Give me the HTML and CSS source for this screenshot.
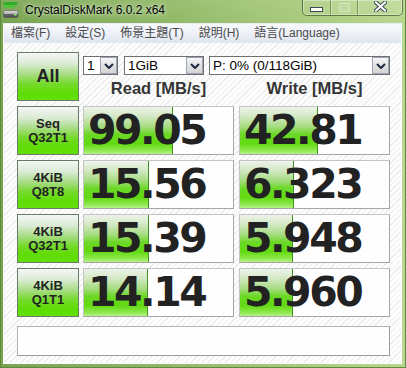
FILE: index.html
```html
<!DOCTYPE html>
<html>
<head>
<meta charset="utf-8">
<link rel="stylesheet" href="styles.css">
</head>
<body>
<div class="window">
  <div class="titlebar">
    <svg class="app-icon" width="16" height="16" viewBox="0 0 16 16">
      <defs>
        <linearGradient id="drv" x1="0" y1="0" x2="0" y2="1">
          <stop offset="0" stop-color="#e4e4e4"/>
          <stop offset="0.45" stop-color="#b0b0b0"/>
          <stop offset="0.5" stop-color="#6a6a6a"/>
          <stop offset="1" stop-color="#4a4a4a"/>
        </linearGradient>
      </defs>
      <rect x="0.5" y="0" width="14" height="3" rx="1" fill="#2fae2a"/>
      <rect x="0.5" y="3.2" width="11" height="2.6" rx="1" fill="#48c63a"/>
      <rect x="0.5" y="8.5" width="14.5" height="7" rx="1.5" fill="url(#drv)" stroke="#5a5a5a" stroke-width="0.6"/>
      <rect x="11" y="12" width="2.5" height="1.5" fill="#8ef06a"/>
    </svg>
    <span class="title">CrystalDiskMark 6.0.2 x64</span>
    <div class="controls">
      <div class="ctl ctl-min">
        <svg width="13" height="5" viewBox="0 0 13 5"><rect x="0.5" y="0.5" width="12" height="4" fill="#fff" stroke="#3c4a5c"/></svg>
      </div>
      <div class="ctl ctl-max">
        <svg width="11" height="9" viewBox="0 0 11 9"><rect x="0.5" y="0.5" width="10" height="8" fill="none" stroke="rgba(255,255,255,0.45)"/><rect x="2.5" y="3" width="6" height="3.5" fill="none" stroke="rgba(255,255,255,0.35)"/></svg>
      </div>
      <div class="ctl ctl-close">
        <svg width="13" height="11" viewBox="0 0 13 11"><path d="M2 1.5 L11 9.5 M11 1.5 L2 9.5" stroke="#3c4a5c" stroke-width="4" stroke-linecap="square"/><path d="M2 1.5 L11 9.5 M11 1.5 L2 9.5" stroke="#fff" stroke-width="2" stroke-linecap="square"/></svg>
      </div>
    </div>
  </div>
  <div class="client">
    <div class="menubar">
      <span class="menu-item">檔案(F)</span>
      <span class="menu-item">設定(S)</span>
      <span class="menu-item">佈景主題(T)</span>
      <span class="menu-item">說明(H)</span>
      <span class="menu-item">語言(Language)</span>
    </div>
    <div class="main">
      <div class="head-row">
        <div class="btn btn-all">All</div>
        <div class="head-col">
          <div class="selects">
            <div class="select sel-count"><span class="sel-text">1</span><span class="sel-arrow"><svg width="10" height="6" viewBox="0 0 10 6"><path d="M1 1 L5 5 L9 1" fill="none" stroke="#1c2b45" stroke-width="2"/></svg></span></div>
            <div class="select sel-size"><span class="sel-text">1GiB</span><span class="sel-arrow"><svg width="10" height="6" viewBox="0 0 10 6"><path d="M1 1 L5 5 L9 1" fill="none" stroke="#1c2b45" stroke-width="2"/></svg></span></div>
            <div class="select sel-drive"><span class="sel-text">P: 0% (0/118GiB)</span><span class="sel-arrow"><svg width="10" height="6" viewBox="0 0 10 6"><path d="M1 1 L5 5 L9 1" fill="none" stroke="#1c2b45" stroke-width="2"/></svg></span></div>
          </div>
          <div class="heads">
            <div class="col-head">Read [MB/s]</div>
            <div class="col-head">Write [MB/s]</div>
          </div>
        </div>
      </div>

      <div class="row">
        <div class="btn btn-test"><span>Seq</span><span>Q32T1</span></div>
        <div class="val"><div class="bar" style="width:89px"></div><span class="num">99.05</span></div>
        <div class="val"><div class="bar" style="width:78px"></div><span class="num">42.81</span></div>
      </div>
      <div class="row">
        <div class="btn btn-test"><span>4KiB</span><span>Q8T8</span></div>
        <div class="val"><div class="bar" style="width:65px"></div><span class="num">15.56</span></div>
        <div class="val"><div class="bar" style="width:54px"></div><span class="num">6.323</span></div>
      </div>
      <div class="row">
        <div class="btn btn-test"><span>4KiB</span><span>Q32T1</span></div>
        <div class="val"><div class="bar" style="width:65px"></div><span class="num">15.39</span></div>
        <div class="val"><div class="bar" style="width:53px"></div><span class="num">5.948</span></div>
      </div>
      <div class="row">
        <div class="btn btn-test"><span>4KiB</span><span>Q1T1</span></div>
        <div class="val"><div class="bar" style="width:64px"></div><span class="num">14.14</span></div>
        <div class="val"><div class="bar" style="width:53px"></div><span class="num">5.960</span></div>
      </div>

      <div class="status"></div>
    </div>
  </div>
</div>
</body>
</html>
```
FILE: styles.css
```css
html, body {
  margin: 0;
  padding: 0;
  width: 406px;
  height: 368px;
  overflow: hidden;
}

.window {
  width: 406px;
  height: 368px;
  box-sizing: border-box;
  display: flex;
  flex-direction: column;
  background: linear-gradient(to right, #78a450 0%, #8fb865 40%, #a9cb7c 75%, #b9d78e 100%);
  border-left: 1px solid #5f8a3e;
  border-right: 1px solid #5f8a3e;
  border-bottom: 1px solid #5f8a3e;
  font-family: "Liberation Sans", "Noto Sans CJK TC", sans-serif;
}

.titlebar {
  height: 23px;
  flex: none;
  display: flex;
  align-items: flex-start;
  position: relative;
  background: linear-gradient(to bottom, rgba(255,255,255,0.08), rgba(255,255,255,0));
}

.app-icon {
  margin: 2px 0 0 2px;
  flex: none;
}

.title {
  margin: 3px 0 0 6px;
  font-size: 12px;
  line-height: 14px;
  color: #000;
  text-shadow: 0 0 6px rgba(255,255,255,0.7), 0 0 3px rgba(255,255,255,0.6);
}

.controls {
  margin-left: auto;
  margin-right: 2px;
  display: flex;
  height: 15px;
  border: 1px solid rgba(60,90,40,0.75);
  border-top: none;
  border-radius: 0 0 5px 5px;
  box-shadow: inset 0 0 0 1px rgba(255,255,255,0.35);
  background: rgba(255,255,255,0.08);
  overflow: hidden;
}

.ctl {
  display: flex;
  align-items: center;
  justify-content: center;
  height: 15px;
}

.ctl-min { width: 27px; border-right: 1px solid rgba(60,90,40,0.5); box-shadow: 1px 0 0 rgba(255,255,255,0.35); }
.ctl-min svg { margin-top: 4px; }
.ctl-max { width: 26px; border-right: 1px solid rgba(60,90,40,0.5); box-shadow: 1px 0 0 rgba(255,255,255,0.35); }
.ctl-close { width: 44px; }
.ctl-close svg { margin-top: -2px; }

.client {
  flex: 1;
  margin: 0 3px 3px 2px;
  display: flex;
  flex-direction: column;
  border: 1px solid #fff;
  border-top-color: #e8eef8;
  background-color: #fbfbfb;
  background-image: repeating-linear-gradient(135deg, #fdfdfd 0 3px, #ececec 3px 4px);
}

.menubar {
  height: 18px;
  flex: none;
  display: flex;
  align-items: center;
  padding-left: 7px;
  gap: 15px;
  background: linear-gradient(to bottom, #f8f9fc 0%, #eef1f8 50%, #dfe5f0 100%);
  border-bottom: 1px solid #e4e8f0;
}

.menu-item {
  font-size: 12px;
  line-height: 14px;
  color: #4a4a4a;
}

.main {
  flex: 1;
  display: flex;
  flex-direction: column;
  padding: 9px 0 0 13px;
}

.head-row {
  display: flex;
  gap: 4px;
  height: 49px;
}

.btn {
  box-sizing: border-box;
  width: 62px;
  height: 49px;
  flex: none;
  border: 1px solid #6c7a6c;
  background: linear-gradient(to bottom, #f5f7f5 0%, #dcebd6 22%, #a8dc86 45%, #76da2e 65%, #5fdc04 85%, #62e008 100%);
  display: flex;
  flex-direction: column;
  align-items: center;
  justify-content: center;
  color: #232323;
  font-weight: bold;
}

.btn-all {
  font-size: 18px;
}

.btn-test {
  font-size: 13px;
  line-height: 14px;
}

.head-col {
  display: flex;
  flex-direction: column;
  width: 307px;
}

.selects {
  display: flex;
  margin-top: 4px;
  height: 19px;
}

.select {
  box-sizing: border-box;
  height: 19px;
  display: flex;
  align-items: stretch;
  border: 1px solid #707070;
  background: #fff;
}

.sel-count { width: 35px; }
.sel-size { width: 80px; margin-left: 6px; }
.sel-drive { width: 181px; margin-left: 5px; }

.sel-text {
  flex: 1;
  font-size: 13.5px;
  line-height: 17px;
  padding-left: 3px;
  color: #000;
  white-space: nowrap;
  overflow: hidden;
}

.sel-arrow {
  box-sizing: border-box;
  width: 17px;
  flex: none;
  display: flex;
  align-items: center;
  justify-content: center;
  border: 1px solid #9aa4b4;
  background: linear-gradient(to bottom, #f6f6f6, #e2e2e2 50%, #d4d4d4);
}

.heads {
  display: flex;
  gap: 5px;
  margin-top: 3px;
}

.col-head {
  width: 151px;
  text-align: center;
  font-size: 16.5px;
  font-weight: bold;
  color: #353535;
  line-height: 20px;
}

.row {
  display: flex;
  margin-top: 5px;
  height: 49px;
}

.row .btn-test { margin-right: 4px; }
.row .val + .val { margin-left: 5px; }

.val {
  box-sizing: border-box;
  width: 151px;
  height: 49px;
  display: grid;
  border: 1px solid #c4c4c4;
  border-right-color: #a6a6a6;
  border-bottom-color: #a6a6a6;
  background: rgba(255,255,255,0.78);
}

.bar {
  grid-area: 1 / 1;
  height: 100%;
  box-sizing: border-box;
  border-right: 1px solid #3f8f22;
  background: linear-gradient(to bottom, #eef3ea 0%, #d3e8c4 20%, #a6dc80 42%, #6cd826 58%, #62da12 78%, #8ce84c 92%, #b6f286 100%);
}

.num {
  grid-area: 1 / 1;
  align-self: center;
  padding-left: 4px;
  font-family: "DejaVu Sans", sans-serif;
  font-weight: bold;
  font-size: 41px;
  letter-spacing: -2.5px;
  line-height: 47px;
  color: #222;
}

.status {
  box-sizing: border-box;
  margin-top: 9px;
  width: 373px;
  height: 30px;
  border: 1px solid #b4b4b4;
  border-right-color: #9c9c9c;
  border-bottom-color: #9c9c9c;
  background: rgba(255,255,255,0.85);
}
```
